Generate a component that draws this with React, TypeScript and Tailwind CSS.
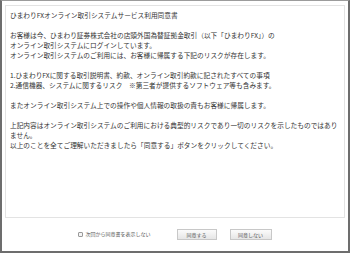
import React from 'react'

const BODY_FONT = { fontFamily: '"Noto Sans CJK JP", "Liberation Sans", sans-serif' }

function Line({ children }: { children?: React.ReactNode }) {
  return <div className="h-[10px] whitespace-nowrap">{children}</div>
}

export default function App() {
  return (
    <div
      className="w-[350px] h-[253px] bg-white border-[#6d6d6d] border-l-2 border-r-2 border-b-2 border-t border-t-[#9c9c9c] box-border flex flex-col"
      style={BODY_FONT}
    >
      <div className="mx-[3px] mt-[4px] h-[213px] border border-[#e3e3e3] px-[4px] pt-[4px] text-[6.7px] leading-[10px] text-[#333]">
        <Line>ひまわりFXオンライン取引システムサービス利用同意書</Line>
        <Line />
        <Line>お客様は今、ひまわり証券株式会社の店頭外国為替証拠金取引（以下「ひまわりFX」）の</Line>
        <Line>オンライン取引システムにログインしています。</Line>
        <Line>オンライン取引システムのご利用には、お客様に帰属する下記のリスクが存在します。</Line>
        <Line />
        <Line>1.ひまわりFXに関する取引説明書、約款、オンライン取引約款に記されたすべての事項</Line>
        <Line>2.通信機器、システムに関するリスク　※第三者が提供するソフトウェア等も含みます。</Line>
        <Line />
        <Line>またオンライン取引システム上での操作や個人情報の取扱の責もお客様に帰属します。</Line>
        <Line />
        <Line>上記内容はオンライン取引システムのご利用における典型的リスクであり一切のリスクを示したものではあり</Line>
        <Line>ません。</Line>
        <Line>以上のことを全てご理解いただきましたら「同意する」ボタンをクリックしてください。</Line>
      </div>
      <div className="flex-1 flex items-center justify-center pb-[1px]">
        <label className="flex items-center gap-[2px] text-[5px] text-[#555] mr-[26px]">
          <span className="w-[5px] h-[5px] border border-[#999] bg-[#f4f4f4] rounded-[1px]" />
          <span>次回から同意書を表示しない</span>
        </label>
        <button
          type="button"
          className="w-[40px] h-[11px] text-[5px] text-[#555] border border-[#c8c8c8] bg-gradient-to-b from-[#fbfbfb] to-[#e6e6e6] mr-[13px] leading-none"
        >
          同意する
        </button>
        <button
          type="button"
          className="w-[42px] h-[11px] text-[5px] text-[#555] border border-[#c8c8c8] bg-gradient-to-b from-[#fbfbfb] to-[#e6e6e6] leading-none"
        >
          同意しない
        </button>
      </div>
    </div>
  )
}
